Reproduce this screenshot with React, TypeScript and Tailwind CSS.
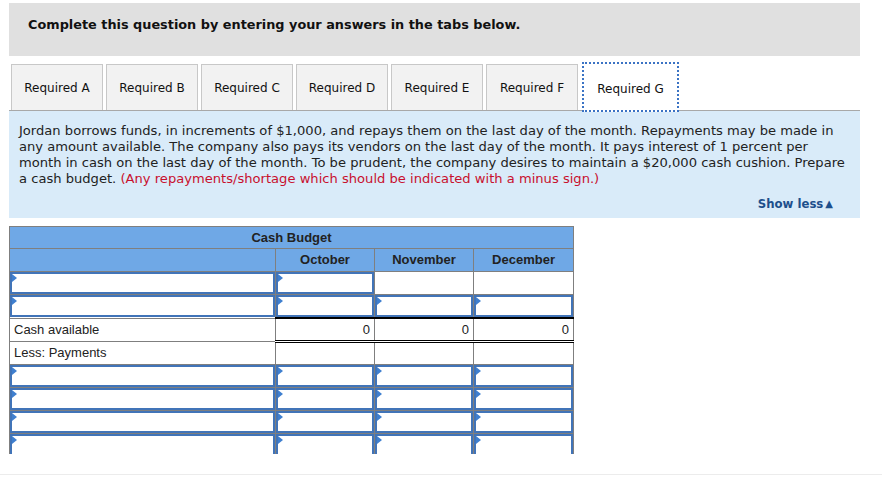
import type { ReactNode } from 'react'

const tabs = ['Required A', 'Required B', 'Required C', 'Required D', 'Required E', 'Required F', 'Required G']

type Cell = 'input' | 'plain' | 'zero'

type Row = { label?: string; cells: [Cell, Cell, Cell, Cell]; total?: boolean }

const rows: Row[] = [
  { cells: ['input', 'input', 'plain', 'plain'] },
  { cells: ['input', 'input', 'input', 'input'] },
  { label: 'Cash available', cells: ['plain', 'zero', 'zero', 'zero'], total: true },
  { label: 'Less: Payments', cells: ['plain', 'plain', 'plain', 'plain'] },
  { cells: ['input', 'input', 'input', 'input'] },
  { cells: ['input', 'input', 'input', 'input'] },
  { cells: ['input', 'input', 'input', 'input'] },
  { cells: ['input', 'input', 'input', 'input'] },
  { cells: ['input', 'input', 'input', 'input'] },
]

function InputBox() {
  return (
    <div className="relative h-[22px] border-2 border-[#4174b8] bg-white">
      <span className="absolute left-0 top-0 h-0 w-0 border-y-[4px] border-y-transparent border-l-[5px] border-l-[#3f7fcf]" />
    </div>
  )
}

function Td({ kind, label, total }: { kind: Cell; label?: string; total?: boolean }): ReactNode {
  if (kind === 'input') {
    return (
      <td className="border border-[#7f7f7f] p-0">
        <InputBox />
      </td>
    )
  }
  if (kind === 'zero') {
    return (
      <td
        className={`border border-[#7f7f7f] px-[4px] text-right align-middle ${
          total ? 'border-t-2 border-t-black border-b-[3px] border-b-black border-double' : ''
        }`}
      >
        0
      </td>
    )
  }
  return <td className="border border-[#7f7f7f] px-[4px] align-middle">{label}</td>
}

export default function App() {
  return (
    <div className="relative h-[478px] w-[882px] overflow-hidden bg-white font-['DejaVu_Sans',sans-serif] text-[#111]">
      <div className="ml-[9px] w-[851px] pt-[3px]">
        <div className="h-[53px] bg-[#e0e0e0] pl-[19px] pt-[12px] text-[12.85px] font-bold">
          Complete this question by entering your answers in the tabs below.
        </div>

        <div className="mt-[8px] flex h-[47px] items-end border-b border-[#a8a8a8] pl-[2px]">
          {tabs.map((t, i) =>
            i === tabs.length - 1 ? (
              <div
                key={t}
                className="relative z-10 -mb-[2px] ml-[1px] flex h-[50px] w-[97px] shrink-0 items-center justify-center border-2 border-dotted border-[#3b73c4] bg-white pt-[3px] text-[12px]"
              >
                {t}
              </div>
            ) : (
              <div
                key={t}
                className="mr-[3px] flex h-[46px] w-[92px] shrink-0 items-center justify-center border border-b-0 border-[#c8c8c8] bg-[#f2f2f2] text-[12px]"
              >
                {t}
              </div>
            ),
          )}
        </div>

        <div className="relative h-[107px] bg-[#d9ebf9] pl-[10px] pt-[12px] text-[13.1px] leading-[16px] text-[#222]">
          <p>
            Jordan borrows funds, in increments of $1,000, and repays them on the last day of the month. Repayments may be made in
            <br />
            any amount available. The company also pays its vendors on the last day of the month. It pays interest of 1 percent per
            <br />
            month in cash on the last day of the month. To be prudent, the company desires to maintain a $20,000 cash cushion. Prepare
            <br />
            a cash budget. <span className="text-[#c8102e]">(Any repayments/shortage which should be indicated with a minus sign.)</span>
          </p>
          <div className="absolute right-[27px] top-[85px] flex items-center gap-[2px] text-[11.7px] font-bold text-[#1d4f8c]">
            Show less
            <span className="text-[10px]">▲</span>
          </div>
        </div>

        <div className="mt-[8px] h-[228px] overflow-hidden">
          <table className="w-[564px] table-fixed border-collapse font-['Liberation_Sans',Arial,sans-serif] text-[13px] text-[#222]">
            <colgroup>
              <col className="w-[266px]" />
              <col className="w-[99px]" />
              <col className="w-[99px]" />
              <col className="w-[100px]" />
            </colgroup>
            <thead>
              <tr className="h-[22px] bg-[#6fa8e6]">
                <th colSpan={4} className="border border-[#7f7f7f] text-center font-bold">
                  Cash Budget
                </th>
              </tr>
              <tr className="h-[23px] bg-[#6fa8e6]">
                <th className="border border-[#7f7f7f]" />
                <th className="border border-[#7f7f7f] font-bold">October</th>
                <th className="border border-[#7f7f7f] font-bold">November</th>
                <th className="border border-[#7f7f7f] font-bold">December</th>
              </tr>
            </thead>
            <tbody>
              {rows.map((r, i) => (
                <tr key={i} className="h-[23px]">
                  {r.cells.map((c, j) => (
                    <Td key={j} kind={c} label={j === 0 ? r.label : undefined} total={r.total} />
                  ))}
                </tr>
              ))}
            </tbody>
          </table>
        </div>
      </div>
      <div className="absolute bottom-[3px] left-0 h-px w-full bg-[#ececec]" />
    </div>
  )
}
